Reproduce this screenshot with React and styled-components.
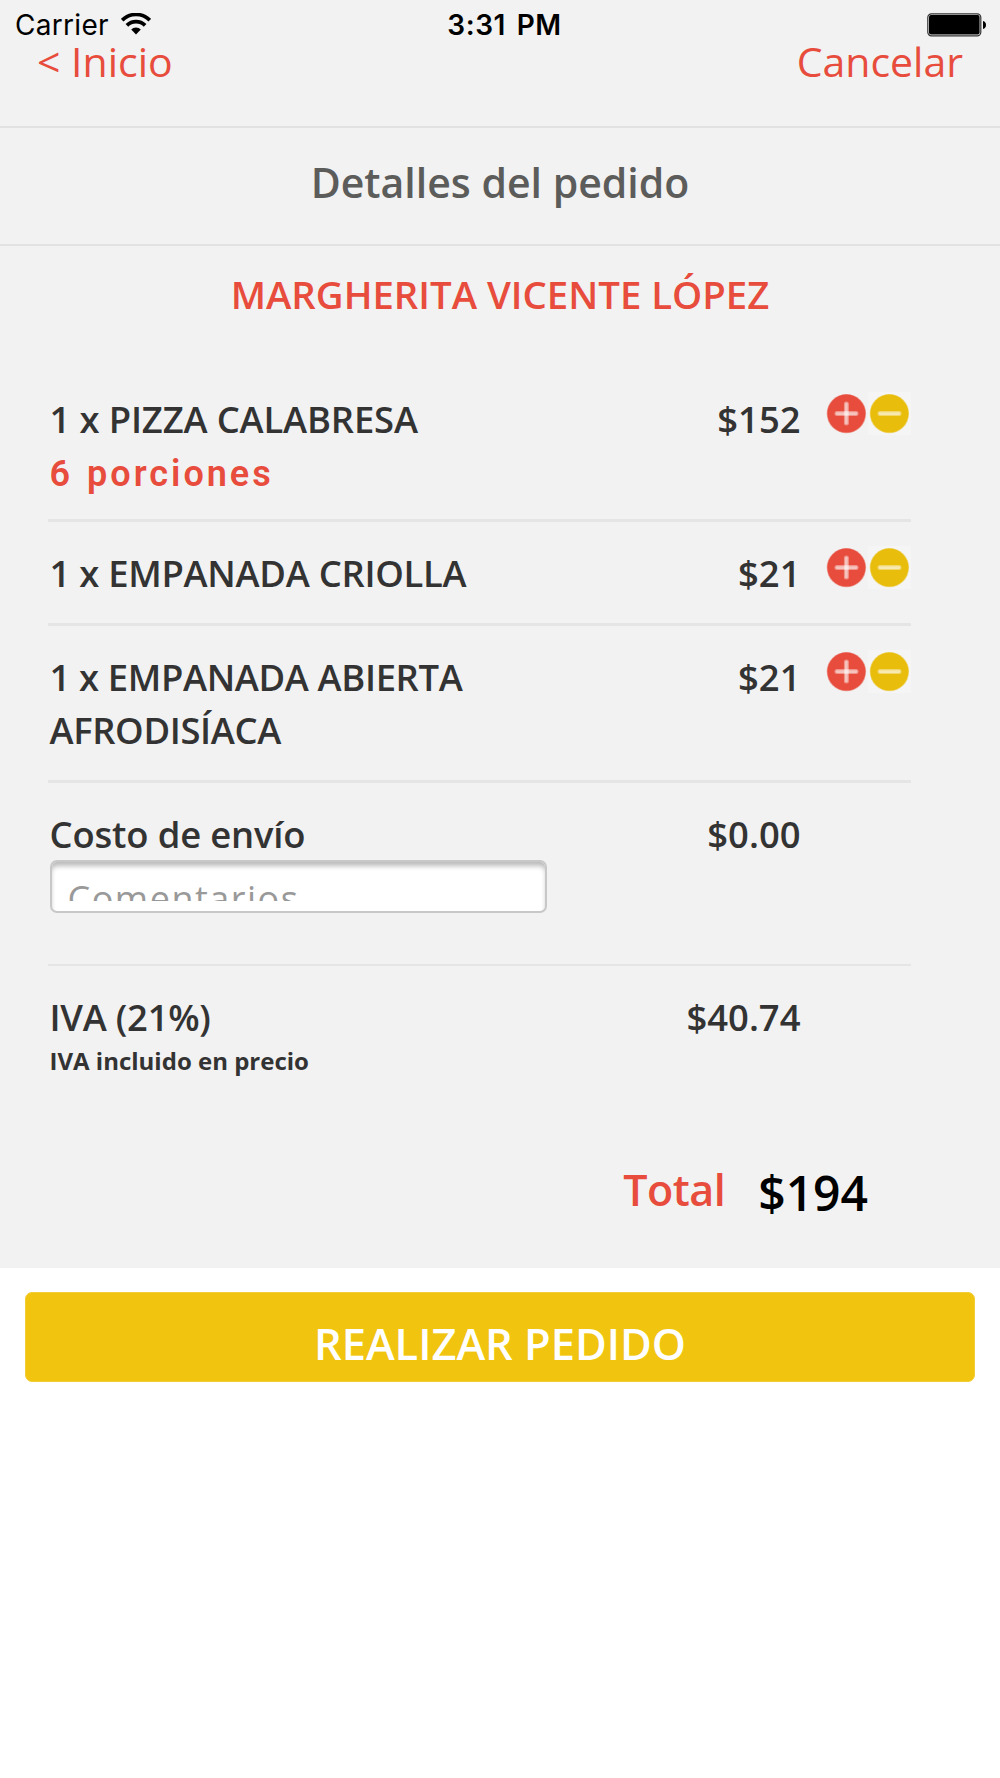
import React from "react";
import styled, { createGlobalStyle } from "styled-components";

const items = [
  { id: 1, name: "1 x PIZZA CALABRESA", detail: "6 porciones", price: "$152", tracking: -0.15 },
  { id: 2, name: "1 x EMPANADA CRIOLLA", price: "$21", tracking: -0.28 },
  { id: 3, name: "1 x EMPANADA ABIERTA AFRODISÍACA", price: "$21", tracking: -0.36 },
];

const WifiIcon = () => (
  <svg width="30" height="22" viewBox="0 0 30 22">
    <path d="M1.2 7.2 A19.5 19.5 0 0 1 28.8 7.2" fill="none" stroke="#000" strokeWidth="3.7" />
    <path d="M5.9 12.4 A12.8 12.8 0 0 1 24.1 12.4" fill="none" stroke="#000" strokeWidth="3.7" />
    <path d="M15 21.4 L10.2 16.6 A6.8 6.8 0 0 1 19.8 16.6 Z" fill="#000" />
  </svg>
);

const BatteryIcon = () => (
  <svg width="60" height="24" viewBox="0 0 60 24">
    <rect x="0.8" y="0.8" width="53" height="22" rx="3.6" fill="#f2f2f2" stroke="#333" strokeWidth="1.2" />
    <rect x="2" y="2" width="50.6" height="19.6" rx="2" fill="#000" />
    <path d="M56 8 Q59 8.8 59 12 Q59 15.2 56 16 Z" fill="#000" />
  </svg>
);

const RoundIcon = ({ color, plus }) => (
  <svg width="43" height="43" viewBox="0 0 43 43">
    <circle cx="21.4" cy="21.6" r="19.7" fill={color} opacity="0.5" />
    <circle cx="21.4" cy="21.6" r="19" fill={color} />
    <g stroke="#fff" strokeLinecap="round">
      <path d="M12 21.6 H31" strokeWidth="5" opacity="0.4" />
      <path d="M12 21.6 H31" strokeWidth="2.6" opacity="0.45" />
      {plus && (
        <>
          <path d="M21.4 12 V31" strokeWidth="5" opacity="0.4" />
          <path d="M21.4 12 V31" strokeWidth="2.6" opacity="0.45" />
        </>
      )}
    </g>
  </svg>
);

const App = () => {
  return (
    <>
      <GlobalStyle />
      <Order>
        <StatusBar>
          <Carrier>
            Carrier
            <WifiIcon />
          </Carrier>
          <Clock>3:31 PM</Clock>
          <Battery>
            <BatteryIcon />
          </Battery>
        </StatusBar>
        <Nav>
          <NavLink>&lt; Inicio</NavLink>
          <NavLink>Cancelar</NavLink>
        </Nav>
        <Title>Detalles del pedido</Title>
        <Branch>MARGHERITA VICENTE LÓPEZ</Branch>
        <List>
          {items.map((item) => (
            <Row key={item.id}>
              <Name $tracking={item.tracking}>
                {item.name}
                {item.detail && <Detail>{item.detail}</Detail>}
              </Name>
              <Price>{item.price}</Price>
              <Actions>
                <RoundButton aria-label="+">
                  <RoundIcon color="#e74c3c" plus />
                </RoundButton>
                <RoundButton aria-label="-" $light>
                  <RoundIcon color="#e9bd0b" />
                </RoundButton>
              </Actions>
            </Row>
          ))}
          <Row $bottom={51} $line={2}>
            <Name $tracking={-0.15}>
              Costo de envío
              <Comments>
                <Placeholder>Comentarios</Placeholder>
              </Comments>
            </Name>
            <Price>$0.00</Price>
          </Row>
          <Row $line={0}>
            <Name $tracking={-0.25}>
              IVA (21%)
              <Note>IVA incluido en precio</Note>
            </Name>
            <Price>$40.74</Price>
          </Row>
        </List>
        <Total>
          <TotalLabel>Total</TotalLabel>
          <TotalPrice>$194</TotalPrice>
        </Total>
      </Order>
      <Footer>
        <Submit>REALIZAR PEDIDO</Submit>
      </Footer>
    </>
  );
};

const GlobalStyle = createGlobalStyle`
  * {
    box-sizing: border-box;
  }
  body {
    margin: 0;
    background-color: #fff;
    font-family: "Open Sans", "Noto Sans", sans-serif;
    color: #333;
  }
  svg {
    display: block;
  }
`;
const Order = styled.div`
  display: flex;
  flex-direction: column;
  height: 1268px;
  background-color: #f2f2f2;
`;
const StatusBar = styled.div`
  display: grid;
  grid-template-columns: 1fr auto 1fr;
  align-items: start;
  height: 33px;
  padding: 8px 13px 0 15px;
  font-family: Inter, sans-serif;
  font-size: 28px;
  line-height: 34px;
  color: #000;
`;
const Carrier = styled.div`
  display: flex;
  gap: 12px;
  letter-spacing: 0.3px;

  svg {
    margin-top: 5px;
  }
`;
const Clock = styled.div`
  margin-left: 7px;
  font-weight: 600;
  letter-spacing: 0.6px;
  word-spacing: 3px;
`;
const Battery = styled.div`
  display: flex;
  justify-content: flex-end;
  padding-top: 5px;
`;
const Nav = styled.div`
  display: flex;
  justify-content: space-between;
  height: 95px;
  padding: 0 37px;
  border-bottom: 2px solid #e2e2e2;
`;
const NavLink = styled.a`
  font-size: 41px;
  line-height: 57px;
  color: #e74c3c;
`;
const Title = styled.h1`
  margin: 0;
  height: 118px;
  padding-top: 26px;
  border-bottom: 2px solid #e2e2e2;
  font-size: 41px;
  font-weight: 600;
  line-height: 57px;
  text-align: center;
  color: #5c5c5b;
`;
const Branch = styled.h2`
  margin: 0;
  height: 122px;
  padding-top: 22px;
  font-size: 38.35px;
  font-weight: 600;
  line-height: 53px;
  text-align: center;
  color: #e74c3c;
`;
const List = styled.div`
  width: 863px;
  margin-left: 48px;
`;
const Row = styled.div`
  display: grid;
  grid-template-columns: 497px 254px 86px;
  align-items: start;
  padding: 25px 0 ${(props) => props.$bottom ?? 23}px 1.5px;
  border-bottom: ${(props) => props.$line ?? 3}px solid #e5e5e5;
  font-size: 36.4px;
  font-weight: 600;
  line-height: 53px;
`;
const Name = styled.div`
  letter-spacing: ${(props) => props.$tracking}px;
`;
const Detail = styled.div`
  height: 50px;
  font-family: Roboto, sans-serif;
  font-size: 36px;
  font-weight: 600;
  line-height: 56px;
  letter-spacing: 3px;
  word-spacing: 2px;
  color: #e74c3c;
`;
const Price = styled.div`
  text-align: right;
`;
const Actions = styled.div`
  display: flex;
  margin: -1px 0 0 24.5px;
`;
const RoundButton = styled.button`
  padding: 0;
  border: none;
  background-color: ${(props) => (props.$light ? "#f5f5f5" : "transparent")};
  cursor: pointer;
`;
const Comments = styled.div`
  height: 53px;
  margin-top: -1px;
  padding: 11px 16px 10px;
  border: 2px solid #c8c8c8;
  border-radius: 7px;
  background-color: #fff;
  box-shadow: inset 0 5px 5px -1px #bbb;
`;
const Placeholder = styled.div`
  height: 28px;
  overflow: hidden;
  font-size: 36px;
  font-weight: 400;
  line-height: 51px;
  letter-spacing: 1.5px;
  color: #999;
`;
const Note = styled.div`
  font-size: 24px;
  font-weight: 700;
  line-height: 34px;
  letter-spacing: 0;
`;
const Total = styled.div`
  display: flex;
  align-items: flex-start;
  justify-content: flex-end;
  gap: 33px;
  margin-top: 59px;
  padding-right: 132px;
  font-weight: 600;
`;
const TotalLabel = styled.span`
  font-size: 43px;
  line-height: 60px;
  letter-spacing: -0.5px;
  color: #e74c3c;
`;
const TotalPrice = styled.span`
  font-size: 48px;
  line-height: 66px;
  color: #000;
`;
const Footer = styled.div`
  padding: 24px 25px;
`;
const Submit = styled.button`
  display: block;
  width: 100%;
  height: 90px;
  padding: 14px 0 0;
  border: 1px solid #f3cd35;
  border-radius: 7px;
  background-color: #f1c40f;
  font-family: inherit;
  font-size: 43.4px;
  font-weight: 600;
  line-height: 60px;
  color: #fff;
`;

export default App;
